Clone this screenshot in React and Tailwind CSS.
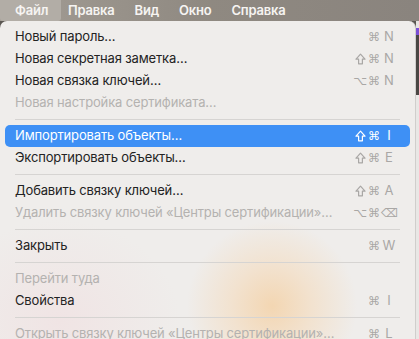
import React from "react";

const items = [
  { label: "Новый пароль…", mods: "⌘", key: "N" },
  { label: "Новая секретная заметка…", mods: "⇧⌘", key: "N" },
  { label: "Новая связка ключей…", mods: "⌥⌘", key: "N" },
  { label: "Новая настройка сертификата…", disabled: true },
  { sep: true },
  { label: "Импортировать объекты…", mods: "⇧⌘", key: "I", active: true },
  { label: "Экспортировать объекты…", mods: "⇧⌘", key: "E" },
  { sep: true },
  { label: "Добавить связку ключей…", mods: "⇧⌘", key: "A" },
  { label: "Удалить связку ключей «Центры сертификации»…", mods: "⌥⌘", key: "⌫", disabled: true },
  { sep: true },
  { label: "Закрыть", mods: "⌘", key: "W" },
  { sep: true },
  { label: "Перейти туда", disabled: true },
  { label: "Свойства", mods: "⌘", key: "I" },
  { sep: true },
  { label: "Открыть связку ключей «Центры сертификации»…", mods: "⌘", key: "L", disabled: true },
];

const topMenus = ["Правка", "Вид", "Окно", "Справка"];

const ShiftIcon = () => (
  <svg width="11" height="12" viewBox="0 0 11 12" className="mr-[2px]">
    <path
      d="M5.5 1.2 L10 6.2 H7.4 V10.8 H3.6 V6.2 H1 Z"
      fill="none"
      stroke="currentColor"
      strokeWidth="1.2"
      strokeLinejoin="round"
    />
  </svg>
);

const Mod = ({ ch }) => {
  if (ch === "⇧") return <ShiftIcon />;
  return <span className="text-[12px] leading-none mr-[1px]">{ch}</span>;
};

const MenuRow = ({ item }) => {
  if (item.sep) {
    return (
      <div className="h-[11px] flex items-center px-[15px]">
        <div className="h-px w-full bg-[#d6d4d2]" />
      </div>
    );
  }

  const text = item.active
    ? "text-white"
    : item.disabled
    ? "text-[#b4b2b0]"
    : "text-[#232323]";

  const shortcut = item.active ? "text-white" : "text-[#a9a7a5]";

  return (
    <div
      className={`h-[22px] mx-[5px] px-[10px] flex items-center rounded-[5px] ${
        item.active ? "bg-[#3e90f5]" : ""
      }`}
    >
      <span className={`flex-1 whitespace-nowrap overflow-hidden text-[13px] tracking-[-0.15px] ${text}`}>
        {item.label}
      </span>
      {item.key && (
        <span className={`flex items-center pl-3 pr-[3px] text-[13px] ${shortcut}`}>
          <span className="flex items-center font-['DejaVu_Sans',sans-serif]">
            {item.mods.split("").map((ch, i) => (
              <Mod key={i} ch={ch} />
            ))}
          </span>
          <span className={`w-4 text-center ${item.key === "⌫" ? "font-['DejaVu_Sans',sans-serif] text-[12px]" : ""}`}>
            {item.key}
          </span>
        </span>
      )}
    </div>
  );
};

export default function App() {
  return (
    <div className="w-[419px] h-[339px] overflow-hidden bg-[#5b5752] font-['Inter',sans-serif] flex flex-col">
      <div className="h-[21px] shrink-0 flex items-center bg-gradient-to-r from-[#a39d95] via-[#8f8981] to-[#8a847e] text-[13px] font-semibold tracking-[-0.2px] text-[#f6f4f2]">
        <div className="h-full w-[61px] pl-[15px] flex items-center rounded-b-[3px] bg-[#b2ada6]">
          Файл
        </div>
        <div className="flex items-center gap-[20px] pl-[7px]">
          {topMenus.map((m) => (
            <span key={m}>{m}</span>
          ))}
        </div>
      </div>

      <div className="flex flex-1 min-h-0">
        <div className="w-[416px] shrink-0 rounded-t-[7px] border-r border-[#d0cecc] pt-[5px] bg-[#efedeb] bg-[radial-gradient(circle_at_272px_285px,#f3d6b2_0px,#f2e2cf_40px,transparent_85px),radial-gradient(ellipse_at_60px_300px,#f0e4e4_0px,transparent_120px)]">
          {items.map((item, i) => (
            <MenuRow key={i} item={item} />
          ))}
        </div>
        <div className="flex-1 flex flex-col">
          <div className="h-[7px] bg-[#e6e3e0]" />
          <div className="h-[7px] bg-[#7b4fd6]" />
          <div className="h-[60px] bg-[#4a4744]" />
          <div className="flex-1 bg-[#e9e7e5]" />
        </div>
      </div>
    </div>
  );
}
